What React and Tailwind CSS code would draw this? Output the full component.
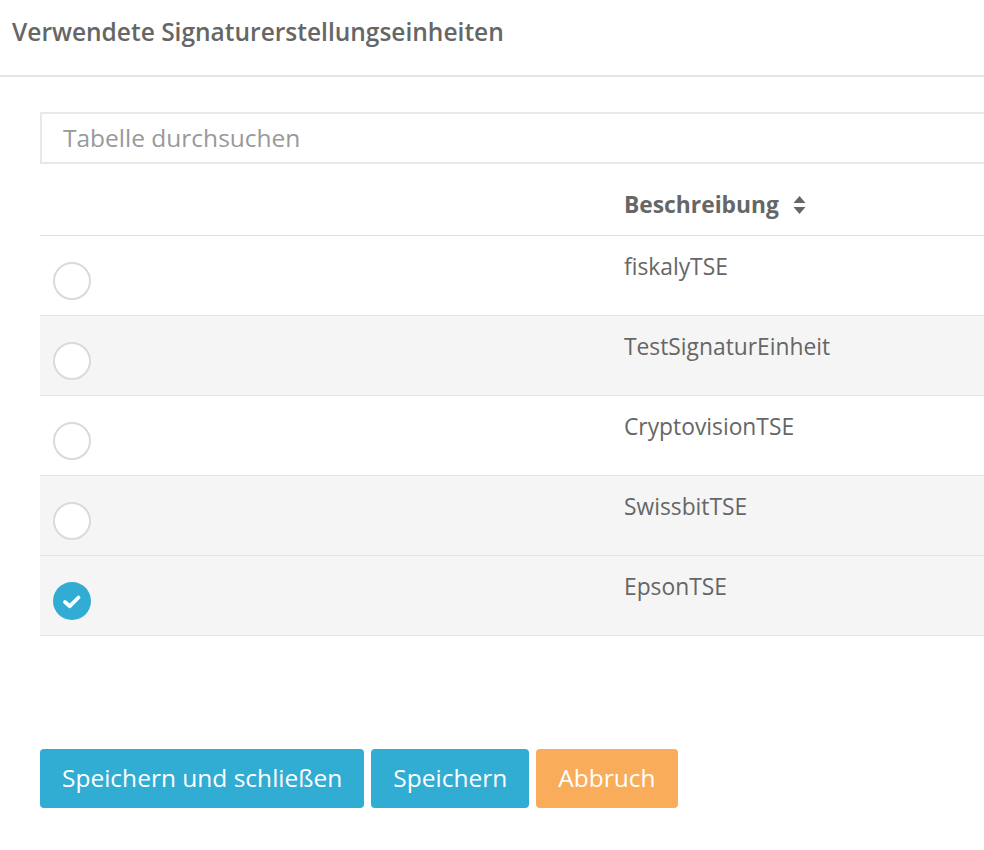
import React from "react";

const rows = [
  { name: "fiskalyTSE", checked: false, gray: false },
  { name: "TestSignaturEinheit", checked: false, gray: true },
  { name: "CryptovisionTSE", checked: false, gray: false },
  { name: "SwissbitTSE", checked: false, gray: true },
  { name: "EpsonTSE", checked: true, gray: true },
];

function Radio({ checked }) {
  if (checked) {
    return (
      <div className="w-[38px] h-[38px] rounded-full bg-[#31acd3] flex items-center justify-center">
        <svg width="20" height="16" viewBox="0 0 20 16" className="-ml-[1px] mt-[2px]">
          <path d="M3 8 L7.8 12.2 L16.5 3.5" fill="none" stroke="white" strokeWidth="3.8" strokeLinecap="round" strokeLinejoin="round" />
        </svg>
      </div>
    );
  }
  return <div className="w-[38px] h-[38px] rounded-full border-2 border-[#dadada] bg-white" />;
}

export default function App() {
  return (
    <div className="w-[984px] h-[850px] overflow-hidden bg-white text-[#666]" style={{ fontFamily: '"Open Sans", sans-serif' }}>
      <div className="h-[77px] border-b-2 border-[#e5e5e5] flex items-center px-[12px]">
        <h1 className="text-[24.5px] font-semibold text-[#666] leading-none -mt-[10px]">Verwendete Signaturerstellungseinheiten</h1>
      </div>
      <div className="pl-[40px] pt-[35px] w-[1200px]">
        <div className="h-[52px] border-2 border-[#e8e8e8] flex items-center pl-[21px] text-[24.5px] text-[#999]">
          Tabelle durchsuchen
        </div>
        <div>
          <div className="flex h-[72px] border-b border-[#dedede]">
            <div className="w-[568px]" />
            <div className="pl-[16px] flex items-center gap-[14px] pt-[11px]">
              <span className="text-[22.8px] font-bold text-[#666]">Beschreibung</span>
              <svg width="13" height="20" viewBox="0 0 13 20">
                <path d="M6.5 1 L12.5 8 L0.5 8 Z" fill="#666" />
                <path d="M6.5 19 L12.5 12 L0.5 12 Z" fill="#666" />
              </svg>
            </div>
          </div>
          {rows.map((r) => (
            <div key={r.name} className={`flex h-[80px] border-b border-[#e5e5e5] ${r.gray ? "bg-[#f5f5f5]" : "bg-white"}`}>
              <div className="w-[568px] pl-[13px] pt-[26px]">
                <Radio checked={r.checked} />
              </div>
              <div className="pl-[16px] pt-[14px] text-[22.8px] leading-[33px] text-[#666]">{r.name}</div>
            </div>
          ))}
        </div>
        <div className="mt-[113px] flex gap-[7px]">
          <button className="h-[59px] px-[22px] rounded-[4px] bg-[#31acd3] text-white text-[24.5px]">Speichern und schließen</button>
          <button className="h-[59px] px-[22px] rounded-[4px] bg-[#31acd3] text-white text-[24.5px]">Speichern</button>
          <button className="h-[59px] px-[22px] rounded-[4px] bg-[#f9ad5a] text-white text-[24.5px]">Abbruch</button>
        </div>
      </div>
    </div>
  );
}
